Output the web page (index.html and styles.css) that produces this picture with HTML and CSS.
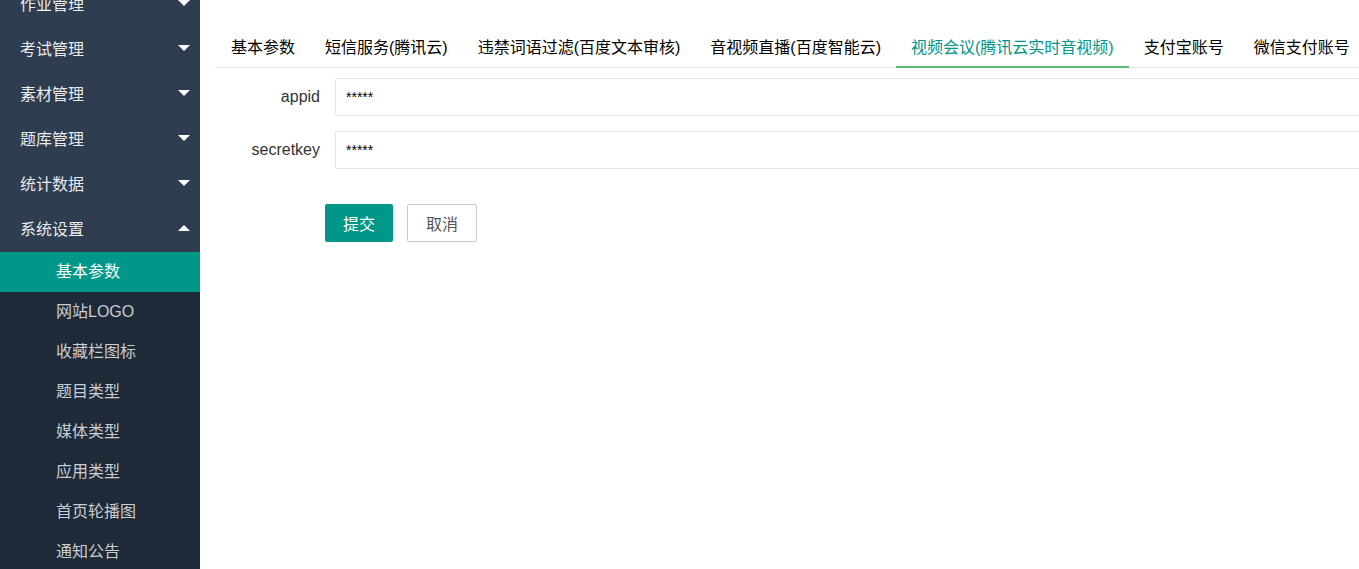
FILE: index.html
```html
<!DOCTYPE html>
<html>
<head>
  <meta charset="UTF-8" />
  <title>系统设置 - 基本参数</title>
  <link rel="stylesheet" href="styles.css">
</head>
<body>
  <div class="layout">
    <div class="side">
      <ul class="nav">
        <li class="nav-item"><a class="nav-link">作业管理<span class="arrow"></span></a></li>
        <li class="nav-item"><a class="nav-link">考试管理<span class="arrow"></span></a></li>
        <li class="nav-item"><a class="nav-link">素材管理<span class="arrow"></span></a></li>
        <li class="nav-item"><a class="nav-link">题库管理<span class="arrow"></span></a></li>
        <li class="nav-item"><a class="nav-link">统计数据<span class="arrow"></span></a></li>
        <li class="nav-item open">
          <a class="nav-link">系统设置<span class="arrow up"></span></a>
          <dl class="nav-child">
            <dd class="this"><a>基本参数</a></dd>
            <dd><a>网站LOGO</a></dd>
            <dd><a>收藏栏图标</a></dd>
            <dd><a>题目类型</a></dd>
            <dd><a>媒体类型</a></dd>
            <dd><a>应用类型</a></dd>
            <dd><a>首页轮播图</a></dd>
            <dd><a>通知公告</a></dd>
          </dl>
        </li>
      </ul>
    </div>

    <div class="main">
      <div class="tab">
        <ul class="tab-title">
          <li>基本参数</li>
          <li>短信服务(腾讯云)</li>
          <li>违禁词语过滤(百度文本审核)</li>
          <li>音视频直播(百度智能云)</li>
          <li class="this">视频会议(腾讯云实时音视频)</li>
          <li>支付宝账号</li>
          <li>微信支付账号</li>
        </ul>
        <div class="tab-content">
          <form class="form">
            <div class="form-item">
              <label class="form-label">appid</label>
              <div class="input-block"><input class="input" type="text" value="*****"></div>
            </div>
            <div class="form-item">
              <label class="form-label">secretkey</label>
              <div class="input-block"><input class="input" type="text" value="*****"></div>
            </div>
            <div class="form-btns">
              <button type="button" class="btn">提交</button>
              <button type="button" class="btn btn-primary">取消</button>
            </div>
          </form>
        </div>
      </div>
    </div>
  </div>
</body>
</html>
```

FILE: styles.css
```css
html, body {
  margin: 0;
  padding: 0;
  height: 100%;
  overflow: hidden;
}
body {
  font-family: Arial, "Liberation Sans", "Noto Sans CJK SC", sans-serif;
  font-size: 14px;
  color: #333;
  background-color: #fff;
}
ul, dl, dd {
  margin: 0;
  padding: 0;
  list-style: none;
}
.layout {
  display: flex;
  height: 569px;
}
.side {
  width: 200px;
  flex: none;
  background-color: #2f3d50;
  overflow: hidden;
}
.nav {
  margin-top: -18px;
}
.nav-link {
  display: flex;
  align-items: center;
  box-sizing: border-box;
  height: 45px;
  padding: 0 10px 3px 20px;
  font-size: 16px;
  color: rgba(255, 255, 255, 0.92);
  cursor: pointer;
}
.arrow {
  margin-left: auto;
  width: 0;
  height: 0;
  border-left: 6px solid transparent;
  border-right: 6px solid transparent;
  border-top: 6px solid #fff;
}
.arrow.up {
  border-top: none;
  border-bottom: 6px solid #fff;
}
.nav-child {
  background-color: #1f2a38;
}
.nav-child dd a {
  display: block;
  height: 40px;
  line-height: 40px;
  padding-left: 56px;
  font-size: 16px;
  color: #c9cdd2;
  cursor: pointer;
}
.nav-child dd.this a {
  background-color: #009688;
  color: #fff;
}
.main {
  flex: 1;
  min-width: 1180px;
  padding: 28px 0 0 15px;
}
.tab-title {
  display: flex;
  height: 39px;
  border-bottom: 1px solid #e6e6e6;
  padding-left: 1px;
}
.tab-title li {
  position: relative;
  padding: 0 15px;
  line-height: 39px;
  font-size: 16px;
  color: #000;
  white-space: nowrap;
  cursor: pointer;
}
.tab-title li.this {
  color: #009688;
}
.tab-title li.this:after {
  content: "";
  position: absolute;
  left: 0;
  right: 0;
  bottom: -1px;
  height: 2px;
  background-color: #5fb878;
}
.tab-content {
  padding: 10px 0 0 10px;
}
.form-item {
  display: flex;
  margin-bottom: 15px;
}
.form-label {
  width: 80px;
  padding: 0 15px;
  line-height: 38px;
  text-align: right;
  font-size: 16px;
  color: #333;
}
.input-block {
  flex: 1;
}
.input {
  display: block;
  box-sizing: border-box;
  width: 100%;
  height: 38px;
  padding: 0 10px;
  border: 1px solid #e6e6e6;
  border-radius: 2px;
  font-family: Arial, "Liberation Sans", sans-serif;
  font-size: 14px;
  color: #000;
  outline: none;
}
.form-btns {
  display: flex;
  gap: 14px;
  margin-top: 35px;
  padding-left: 100px;
}
.btn {
  height: 38px;
  padding: 0 18px;
  border: none;
  border-radius: 2px;
  background-color: #009688;
  color: #fff;
  font-family: Arial, "Liberation Sans", "Noto Sans CJK SC", sans-serif;
  font-size: 16px;
  cursor: pointer;
}
.btn-primary {
  border: 1px solid #c9c9c9;
  background-color: #fff;
  color: #555;
}
```
